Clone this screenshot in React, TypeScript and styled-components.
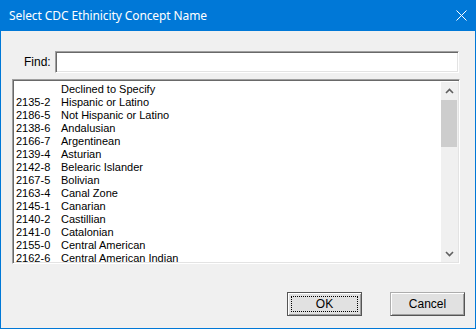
import React from "react";
import styled, { createGlobalStyle } from "styled-components";

const GlobalStyle = createGlobalStyle`
  html, body {
    margin: 0;
    padding: 0;
    background: #f0f0f0;
  }
  * {
    box-sizing: border-box;
  }
`;

const rows: [string, string][] = [
  ["", "Declined to Specify"],
  ["2135-2", "Hispanic or Latino"],
  ["2186-5", "Not Hispanic or Latino"],
  ["2138-6", "Andalusian"],
  ["2166-7", "Argentinean"],
  ["2139-4", "Asturian"],
  ["2142-8", "Belearic Islander"],
  ["2167-5", "Bolivian"],
  ["2163-4", "Canal Zone"],
  ["2145-1", "Canarian"],
  ["2140-2", "Castillian"],
  ["2141-0", "Catalonian"],
  ["2155-0", "Central American"],
  ["2162-6", "Central American Indian"],
];

const Window = styled.div`
  width: 476px;
  height: 329px;
  display: flex;
  flex-direction: column;
  background: #f0f0f0;
  border: 1px solid #0078d7;
  border-top: none;
  font-family: "Liberation Sans", Arial, sans-serif;
  font-size: 11px;
  color: #000;
`;

const TitleBar = styled.div`
  height: 31px;
  margin: 0 -1px;
  background: #0078d7;
  color: #fff;
  display: flex;
  align-items: center;
  justify-content: space-between;
  padding: 0 9px 0 9px;
  font-family: "Noto Sans", "Open Sans", sans-serif;
  font-size: 12px;
`;

const Title = styled.span`
  letter-spacing: -0.1px;
`;

const Body = styled.div`
  flex: 1;
  display: flex;
  flex-direction: column;
  padding: 20px 15px 0 11px;
`;

const FindRow = styled.div`
  display: flex;
  align-items: center;
  gap: 6px;
  padding-left: 12px;
  padding-right: 1px;
`;

const Label = styled.span`
  width: 25px;
  text-align: right;
  font-size: 12px;
  white-space: nowrap;
`;

const Sunken = styled.div`
  border-top: 1px solid #a0a0a0;
  border-left: 1px solid #a0a0a0;
  border-right: 1px solid #fff;
  border-bottom: 1px solid #fff;
  box-shadow: inset 1px 1px 0 #696969, inset -1px -1px 0 #e3e3e3;
  background: #fff;
`;

const Input = styled(Sunken)`
  flex: 1;
  height: 22px;
`;

const ListBox = styled(Sunken)`
  margin-top: 6px;
  height: 185px;
  display: flex;
  padding: 2px 1px 1px 2px;
`;

const Rows = styled.div`
  flex: 1;
  display: flex;
  flex-direction: column;
  padding-top: 1px;
`;

const Row = styled.div`
  height: 13px;
  line-height: 13px;
  display: flex;
  white-space: nowrap;
`;

const Code = styled.span`
  width: 46px;
  padding-left: 1px;
`;

const ScrollBar = styled.div`
  width: 17px;
  background: #f0f0f0;
  display: flex;
  flex-direction: column;
`;

const Arrow = styled.div`
  height: 17px;
  display: flex;
  align-items: center;
  justify-content: center;
`;

const Track = styled.div`
  flex: 1;
`;

const Thumb = styled.div`
  height: 47px;
  margin: 1px 1px 0 0;
  background: #cdcdcd;
`;

const Footer = styled.div`
  display: flex;
  justify-content: flex-end;
  gap: 28px;
  margin-top: 28px;
  margin-right: -5px;
`;

const Button = styled.button<{ $default?: boolean }>`
  width: 75px;
  height: 24px;
  padding: 0;
  font-family: "Liberation Sans", Arial, sans-serif;
  font-size: 12px;
  color: #000;
  background: #e1e1e1;
  border: 1px solid ${({ $default }) => ($default ? "#555" : "#adadad")};
  border-right-color: #555;
  border-bottom-color: #555;
  box-shadow: inset 1px 1px 0 #fff, inset -1px -1px 0 #a0a0a0;
  display: flex;
  align-items: center;
  justify-content: center;
`;

const Focus = styled.span`
  width: 67px;
  height: 16px;
  border: 1px dotted #000;
  display: flex;
  align-items: center;
  justify-content: center;
`;

function Chevron({ up }: { up?: boolean }) {
  return (
    <svg width="9" height="6" viewBox="0 0 9 6">
      <path
        d={up ? "M1 5 L4.5 1.5 L8 5" : "M1 1 L4.5 4.5 L8 1"}
        fill="none"
        stroke="#606060"
        strokeWidth="1.6"
      />
    </svg>
  );
}

export default function App() {
  return (
    <>
      <GlobalStyle />
      <Window>
        <TitleBar>
          <Title>Select CDC Ethinicity Concept Name</Title>
          <svg width="11" height="11" viewBox="0 0 11 11">
            <path d="M0.5 0.5 L10.5 10.5 M10.5 0.5 L0.5 10.5" stroke="#fff" strokeWidth="1" />
          </svg>
        </TitleBar>
        <Body>
          <FindRow>
            <Label>Find:</Label>
            <Input />
          </FindRow>
          <ListBox>
            <Rows>
              {rows.map(([code, name], i) => (
                <Row key={i}>
                  <Code>{code}</Code>
                  <span>{name}</span>
                </Row>
              ))}
            </Rows>
            <ScrollBar>
              <Arrow>
                <Chevron up />
              </Arrow>
              <Track>
                <Thumb />
              </Track>
              <Arrow>
                <Chevron />
              </Arrow>
            </ScrollBar>
          </ListBox>
          <Footer>
            <Button $default>
              <Focus>OK</Focus>
            </Button>
            <Button>Cancel</Button>
          </Footer>
        </Body>
      </Window>
    </>
  );
}
